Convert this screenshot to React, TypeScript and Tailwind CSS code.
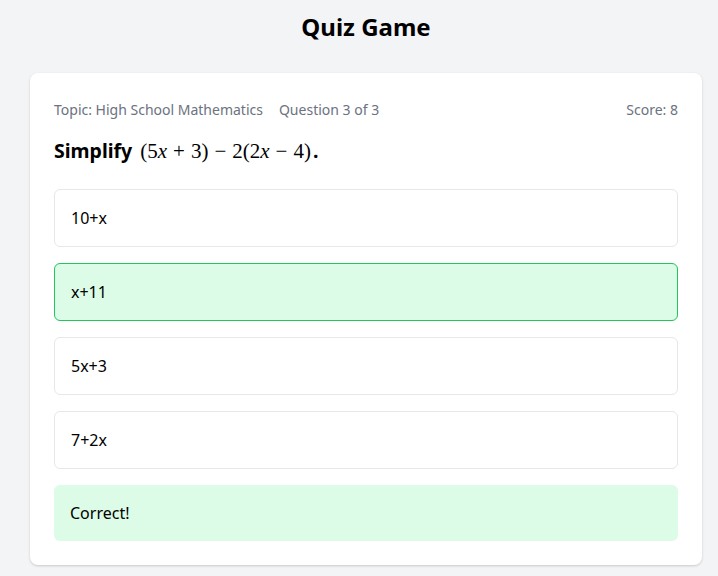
import React from "react";

const options = [
  { text: "10+x", correct: false },
  { text: "x+11", correct: true },
  { text: "5x+3", correct: false },
  { text: "7+2x", correct: false },
];

export default function App() {
  return (
    <div
      className="min-h-[576px] bg-[#f3f4f6] pl-[30px] pr-[16px] pt-[11px] text-black"
      style={{ fontFamily: '"Noto Sans", "Open Sans", sans-serif' }}
    >
      <h1 className="text-center text-2xl font-bold leading-8 mb-[30px]">Quiz Game</h1>
      <div className="bg-white rounded-lg shadow-[0_1px_3px_rgba(0,0,0,0.12),0_1px_2px_rgba(0,0,0,0.06)] p-6">
        <div className="flex items-center justify-between text-sm leading-5 text-[#6b7280] mt-[3px]">
          <div className="flex gap-4">
            <span>Topic: High School Mathematics</span>
            <span>Question 3 of 3</span>
          </div>
          <span>Score: 8</span>
        </div>
        <div className="mt-[17px] mb-6 text-[19.5px] leading-7 font-bold flex items-baseline">
          <span>Simplify</span>
          <span
            className="font-normal ml-[8px] mr-[2px] text-[21px]"
            style={{ fontFamily: '"Liberation Serif", "DejaVu Serif", serif' }}
          >
            (5<i>x</i>
            <span className="mx-[6px]">+</span>3)
            <span className="mx-[6px]">−</span>2(2<i>x</i>
            <span className="mx-[6px]">−</span>4)
          </span>
          <span>.</span>
        </div>
        <div className="flex flex-col gap-4">
          {options.map((o) => (
            <div
              key={o.text}
              className={
                o.correct
                  ? "border border-[#22c55e] bg-[#dcfce7] rounded-md px-4 py-4 text-base leading-6"
                  : "border border-[#e5e7eb] bg-white rounded-md px-4 py-4 text-base leading-6"
              }
            >
              {o.text}
            </div>
          ))}
          <div className="bg-[#dcfce7] rounded-md px-4 py-4 text-base leading-6">Correct!</div>
        </div>
      </div>
    </div>
  );
}
